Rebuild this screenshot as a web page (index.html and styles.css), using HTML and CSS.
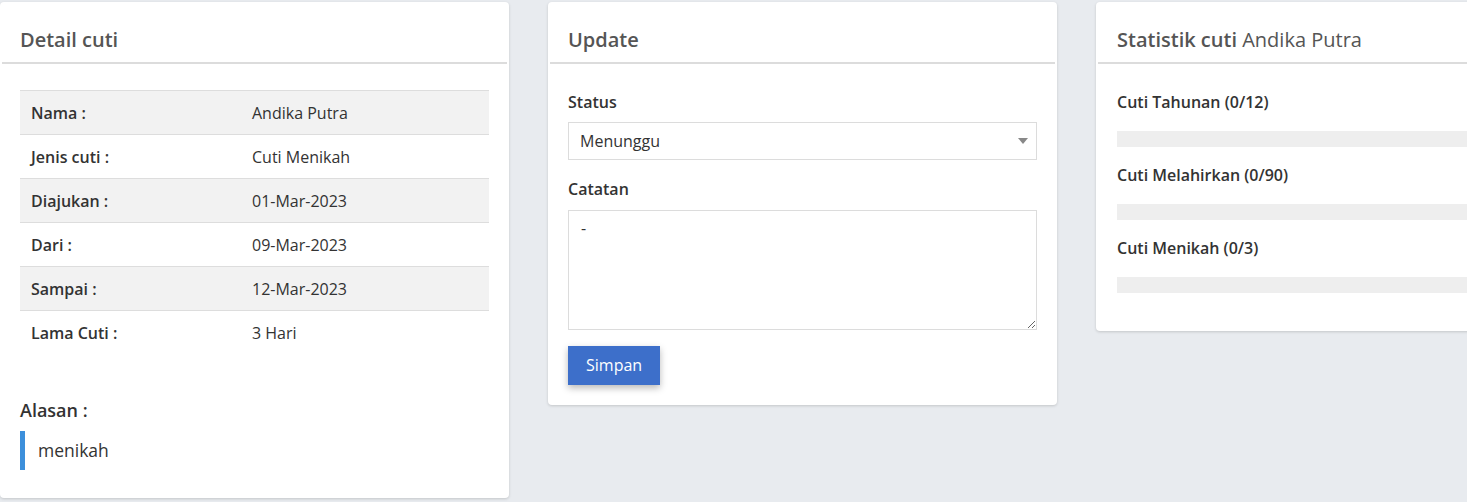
FILE: index.html
```html
<!DOCTYPE html>
<html lang="id">
<head>
<meta charset="utf-8">
<title>Detail cuti</title>
<link rel="stylesheet" href="styles.css">
</head>
<body>
<div class="page">
  <section class="card">
    <header class="card-header"><h3 class="card-title">Detail cuti</h3></header>
    <div class="card-body card-body-detail">
      <table class="detail-table">
        <tbody>
          <tr class="striped"><th>Nama :</th><td>Andika Putra</td></tr>
          <tr><th>Jenis cuti :</th><td>Cuti Menikah</td></tr>
          <tr class="striped"><th>Diajukan :</th><td>01-Mar-2023</td></tr>
          <tr><th>Dari :</th><td>09-Mar-2023</td></tr>
          <tr class="striped"><th>Sampai :</th><td>12-Mar-2023</td></tr>
          <tr><th>Lama Cuti :</th><td>3 Hari</td></tr>
        </tbody>
      </table>
      <h4 class="reason-title">Alasan :</h4>
      <blockquote class="reason">menikah</blockquote>
    </div>
  </section>

  <section class="card">
    <header class="card-header"><h3 class="card-title">Update</h3></header>
    <div class="card-body card-body-form">
      <div class="form-group">
        <label class="form-label" for="status">Status</label>
        <div class="select-wrap">
          <select id="status" class="form-select">
            <option>Menunggu</option>
            <option>Disetujui</option>
            <option>Ditolak</option>
          </select>
        </div>
      </div>
      <div class="form-group form-group-last">
        <label class="form-label label-textarea" for="catatan">Catatan</label>
        <textarea id="catatan" class="form-textarea">-</textarea>
      </div>
      <button class="btn-primary" type="button">Simpan</button>
    </div>
  </section>

  <section class="card">
    <header class="card-header card-header-stats"><h3 class="card-title">Statistik cuti <span class="light">Andika Putra</span></h3></header>
    <div class="card-body card-body-stats">
      <div class="stat-label">Cuti Tahunan (0/12)</div>
      <div class="progress"><div class="progress-bar" style="width:0%"></div></div>
      <div class="stat-label">Cuti Melahirkan (0/90)</div>
      <div class="progress"><div class="progress-bar" style="width:0%"></div></div>
      <div class="stat-label">Cuti Menikah (0/3)</div>
      <div class="progress"><div class="progress-bar" style="width:0%"></div></div>
    </div>
  </section>
</div>
</body>
</html>
```

FILE: styles.css
```css
html, body {
  margin: 0;
  padding: 0;
  overflow: hidden;
}
body {
  background: #e8ebef;
  font-family: "Open Sans", "Noto Sans", sans-serif;
  font-size: 16px;
  color: #333;
  width: 1467px;
  height: 502px;
}
.page {
  display: grid;
  grid-template-columns: 509px 509px 509px;
  column-gap: 39px;
  align-items: start;
  padding-top: 2px;
}
.card {
  background: #fff;
  border-radius: 4px;
  box-shadow: 0 1px 3px rgba(0, 0, 0, 0.16);
}
.card-header {
  margin: 0 2px;
  padding: 24px 18px 8px;
  border-bottom: 2px solid #dcdcdc;
}
.card-header-stats {
  padding-left: 19px;
}
.card-title {
  margin: 0;
  font-size: 20px;
  line-height: 28px;
  font-weight: 600;
  color: #555;
}
.card-title .light {
  font-weight: 400;
}
.card-body {
  padding: 26px 20px 20px;
}
.card-body-detail {
  padding-bottom: 28px;
}
.card-body-form {
  padding-top: 28px;
}
.detail-table {
  width: 100%;
  border-collapse: collapse;
}
.detail-table th,
.detail-table td {
  text-align: left;
  padding: 11px 11px 10px;
  line-height: 22px;
  border-top: 1px solid #dddddd;
  font-size: 16px;
}
.detail-table th {
  width: 199px;
  font-weight: 600;
}
.detail-table .striped {
  background: #f2f2f2;
}
.reason-title {
  margin: 44px 0 9px;
  font-size: 18px;
  line-height: 24px;
  font-weight: 600;
  color: #333;
}
.reason {
  margin: 0;
  padding: 7px 13px;
  border-left: 5px solid #3c8fdb;
  font-size: 17.5px;
  line-height: 25px;
  color: #333;
}
.form-group {
  margin-bottom: 19px;
}
.form-group-last {
  margin-bottom: 16px;
}
.form-label {
  display: block;
  font-weight: 600;
  font-size: 16px;
  line-height: 21px;
  margin-bottom: 9px;
}
.label-textarea {
  margin-bottom: 10px;
}
.select-wrap {
  position: relative;
}
.select-wrap::after {
  content: "";
  position: absolute;
  right: 9px;
  top: 16px;
  border-left: 5px solid transparent;
  border-right: 5px solid transparent;
  border-top: 6px solid #888;
  pointer-events: none;
}
.form-select {
  display: block;
  width: 100%;
  height: 38px;
  box-sizing: border-box;
  border: 1px solid #dcdcdc;
  border-radius: 0;
  background: #fff;
  padding: 0 30px 0 11px;
  font-family: inherit;
  font-size: 16px;
  color: #333;
  -webkit-appearance: none;
  appearance: none;
  outline: none;
}
.form-textarea {
  display: block;
  width: 100%;
  height: 120px;
  box-sizing: border-box;
  border: 1px solid #dcdcdc;
  border-radius: 0;
  padding: 6px 12px;
  font-family: inherit;
  font-size: 16px;
  line-height: 22px;
  color: #333;
  resize: vertical;
  outline: none;
}
.btn-primary {
  display: inline-block;
  height: 39px;
  padding: 0 18px;
  border: none;
  border-radius: 0;
  background: #3d6fca;
  color: #fff;
  font-family: inherit;
  font-size: 16px;
  line-height: 39px;
  box-shadow: 0 3px 7px rgba(0, 0, 0, 0.28);
  cursor: pointer;
}
.card-body-stats {
  padding-top: 28px;
  padding-left: 21px;
  padding-bottom: 20px;
}
.stat-label {
  font-weight: 600;
  font-size: 16px;
  line-height: 21px;
  margin-bottom: 18px;
}
.progress {
  height: 16px;
  background: #eeeeee;
  margin-bottom: 18px;
}
.progress-bar {
  height: 100%;
  background: #3c8fdb;
}
```
